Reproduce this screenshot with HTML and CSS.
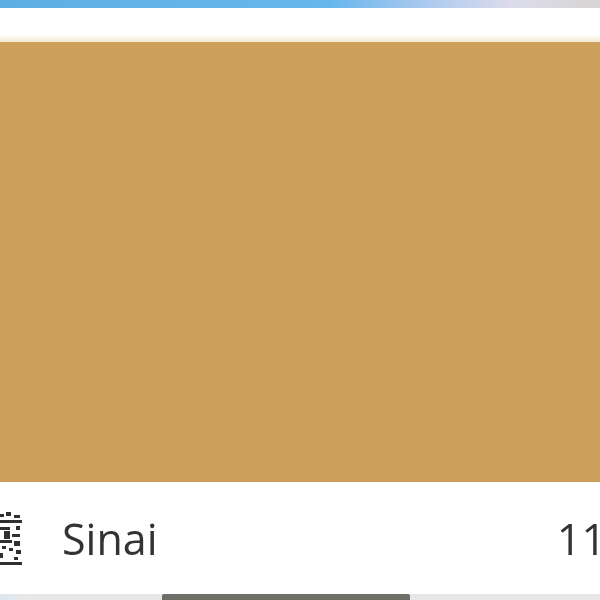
FILE: index.html
```html
<!DOCTYPE html>
<html>
<head>
<meta charset="utf-8">
<link rel="stylesheet" href="styles.css">
</head>
<body>
<div class="page">
  <div class="topbar"></div>
  <div class="spacer"></div>
  <div class="swatch"></div>
  <div class="row">
    <div class="icon">
      <svg width="26" height="60" viewBox="0 0 26 60">
        <g fill="#1a1a1a">
          <rect x="0" y="6" width="4" height="3"/>
          <rect x="6" y="4" width="5" height="4"/>
          <rect x="14" y="7" width="6" height="3"/>
          <rect x="0" y="12" width="22" height="3"/>
          <rect x="16" y="18" width="4" height="4"/>
          <rect x="0" y="19" width="10" height="3"/>
          <rect x="4" y="23" width="6" height="8"/>
          <rect x="12" y="26" width="8" height="3"/>
          <rect x="0" y="32" width="12" height="3"/>
          <rect x="14" y="33" width="6" height="5"/>
          <rect x="2" y="38" width="4" height="3"/>
          <rect x="9" y="40" width="4" height="3"/>
          <rect x="16" y="42" width="5" height="4"/>
          <rect x="0" y="45" width="3" height="5"/>
          <rect x="14" y="49" width="4" height="3"/>
          <rect x="0" y="54" width="22" height="3"/>
        </g>
      </svg>
    </div>
    <div class="name">Sinai</div>
    <div class="value">11</div>
  </div>
  <div class="scrollbar"><div class="track-left"></div><div class="thumb"></div></div>
</div>
</body>
</html>
```
FILE: styles.css
```css
html, body {
  margin: 0;
  padding: 0;
  background: #ffffff;
}
.page {
  width: 600px;
  height: 600px;
  overflow: hidden;
  display: flex;
  flex-direction: column;
}
.topbar {
  height: 8px;
  flex: none;
  background: linear-gradient(to right, #5eaee6 0%, #68b6ec 55%, #a8c8ee 70%, #dcdcec 85%, #d8d4d4 100%);
  box-shadow: 0 1px 2px rgba(120,140,160,0.25);
}
.spacer {
  height: 34px;
  flex: none;
  background: linear-gradient(to bottom, #ffffff 0%, #ffffff 80%, #f3e6cf 100%);
}
.swatch {
  height: 440px;
  flex: none;
  background: #cca05a;
}
.row {
  height: 112px;
  flex: none;
  display: flex;
  align-items: center;
  background: #ffffff;
}
.icon {
  width: 26px;
  flex: none;
  display: flex;
  align-items: center;
  opacity: 0.9;
}
.icon svg {
  display: block;
  filter: blur(0.6px);
}
.name {
  margin-left: 36px;
  font-family: "Open Sans", "Noto Sans", sans-serif;
  font-size: 43px;
  color: #333333;
  filter: blur(0.4px);
}
.value {
  margin-left: auto;
  margin-right: -6px;
  font-family: "Open Sans", "Noto Sans", sans-serif;
  font-size: 43px;
  color: #333333;
  filter: blur(0.4px);
  white-space: nowrap;
}
.scrollbar {
  height: 6px;
  flex: none;
  display: flex;
  background: #e6e6e6;
}
.track-left {
  width: 162px;
  background: linear-gradient(to right, #dde6ee 0%, #e8e8e8 15%, #e6e6e6 100%);
}
.thumb {
  width: 248px;
  background: #6e6d66;
  border-radius: 2px 2px 0 0;
}
```
